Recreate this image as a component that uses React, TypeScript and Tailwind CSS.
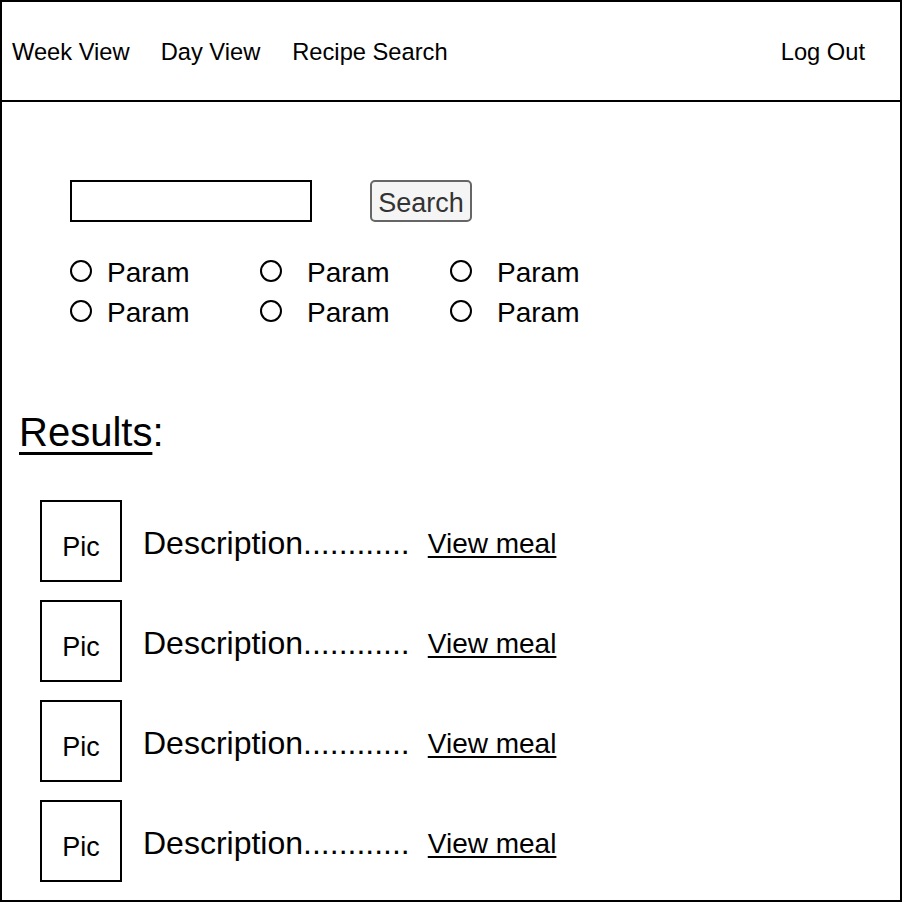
import React from 'react';

const font = { fontFamily: '"Liberation Sans", Arial, sans-serif' };

const params = [
  { col: 0, gap: 'ml-[15px]' },
  { col: 1, gap: 'ml-[25px]' },
  { col: 2, gap: 'ml-[25px]' },
];

const Radio = ({ gap }: { gap: string }) => (
  <div className="flex items-center w-[190px] h-[40px]">
    <span className="w-[22px] h-[22px] rounded-full border-2 border-black shrink-0"></span>
    <span className={`${gap} pt-[4px] text-[28px] leading-none text-black`}>Param</span>
  </div>
);

const ResultRow = () => (
  <div className="flex items-center h-[82px]">
    <div className="w-[82px] h-[82px] border-2 border-black flex items-center justify-center pt-[13px] text-[27px] leading-none text-black shrink-0">
      Pic
    </div>
    <span className="ml-[21px] pt-[4px] text-[32px] leading-none text-black">Description............</span>
    <a href="#" className="ml-[18px] pt-[5px] text-[28px] leading-none text-black underline decoration-2 underline-offset-[3px]">
      View meal
    </a>
  </div>
);

export default function App() {
  return (
    <div style={font} className="w-[902px] h-[902px] border-2 border-black bg-white flex flex-col overflow-hidden">
      <header className="h-[100px] border-b-2 border-black flex items-center pt-[4px] pl-[10px] pr-[35px] text-[23.7px] text-black shrink-0">
        <span>Week View</span>
        <span className="ml-[31px]">Day View</span>
        <span className="ml-[32px]">Recipe Search</span>
        <span className="ml-auto">Log Out</span>
      </header>

      <main className="flex flex-col">
        <div className="flex items-center mt-[78px] pl-[68px] h-[42px]">
          <input type="text" className="w-[242px] h-[42px] border-2 border-black outline-none" />
          <button className="ml-[58px] w-[102px] h-[42px] border-2 border-[#666666] rounded-[5px] bg-[#f5f5f5] text-[#333333] text-[27px] leading-none pt-[4px]">
            Search
          </button>
        </div>

        <div className="mt-[29px] pl-[68px] flex flex-col">
          {[0, 1].map((r) => (
            <div key={r} className="flex">
              {params.map((p) => (
                <Radio key={p.col} gap={p.gap} />
              ))}
            </div>
          ))}
        </div>

        <h2 className="mt-[77px] pl-[17px] h-[48px] leading-[48px] text-[40px] text-black">
          <span className="underline decoration-[3px] underline-offset-[6px]">Results</span>:
        </h2>

        <div className="mt-[44px] pl-[38px] flex flex-col gap-[18px]">
          <ResultRow />
          <ResultRow />
          <ResultRow />
          <ResultRow />
        </div>
      </main>
    </div>
  );
}
